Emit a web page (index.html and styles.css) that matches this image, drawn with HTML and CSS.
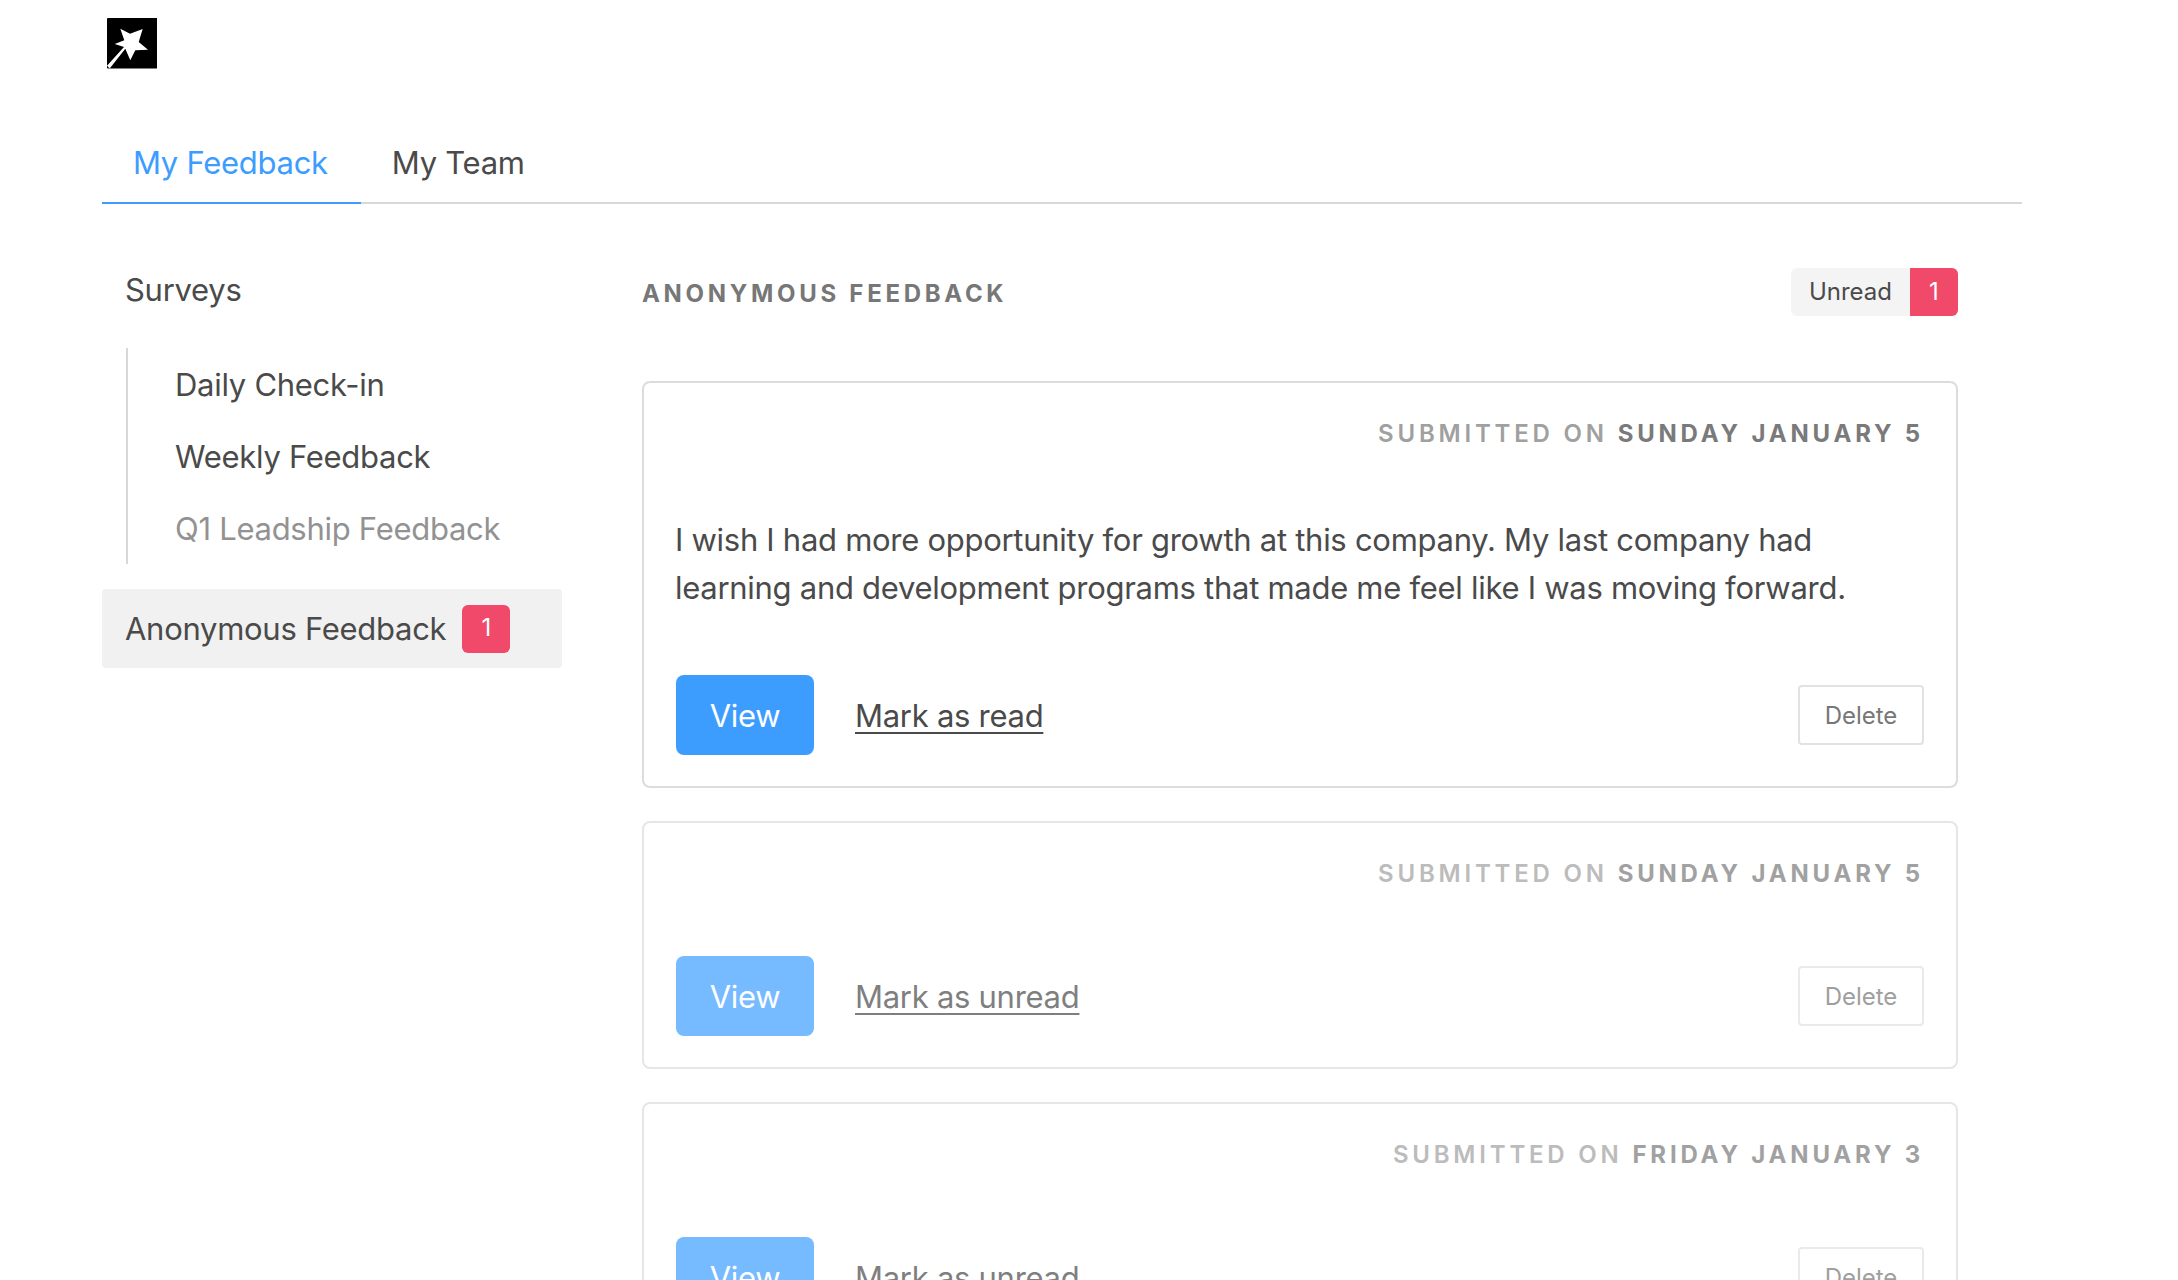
FILE: index.html

```html
<!DOCTYPE html>
<html lang="en">
<head>
  <meta charset="UTF-8" />
  <title>Anonymous Feedback</title>
  <link rel="stylesheet" href="styles.css">
</head>
<body>

<div class="container">
  <div class="logo">
    <svg viewBox="0 0 50.5 50.5" width="50.5" height="50.5">
      <rect width="50.5" height="50.5" rx="1" fill="#000"/>
      <path fill="#fff" d="M13.3 10.7 23 15.7 35.7 11 31.7 24 41 31.7 28.3 32.3 23.3 42.3 18.3 30.7 2.7 50.5 0 47.7 17 29 7.7 26 17.3 22.3Z"/>
    </svg>
  </div>

  <nav class="tabs">
    <a class="tab active">My Feedback</a>
    <a class="tab">My Team</a>
  </nav>

  <div class="columns">
    <aside class="sidebar">
      <div class="side-title">Surveys</div>
      <ul class="side-list">
        <li>Daily Check-in</li>
        <li>Weekly Feedback</li>
        <li class="muted">Q1 Leadship Feedback</li>
      </ul>
      <div class="side-active">Anonymous Feedback <span class="badge">1</span></div>
    </aside>

    <main class="main">
      <div class="main-head">
        <h2>ANONYMOUS FEEDBACK</h2>
        <div class="pill"><span class="pill-label">Unread</span><span class="pill-count">1</span></div>
      </div>

      <div class="card">
        <div class="date">SUBMITTED ON <b>SUNDAY JANUARY 5</b></div>
        <p class="message">I wish I had more opportunity for growth at this company. My last company had learning and development programs that made me feel like I was moving forward.</p>
        <div class="actions">
          <button class="view">View</button>
          <a class="mark">Mark as read</a>
          <button class="delete">Delete</button>
        </div>
      </div>

      <div class="card read">
        <div class="date">SUBMITTED ON <b>SUNDAY JANUARY 5</b></div>
        <div class="actions">
          <button class="view">View</button>
          <a class="mark">Mark as unread</a>
          <button class="delete">Delete</button>
        </div>
      </div>

      <div class="card read">
        <div class="date">SUBMITTED ON <b>FRIDAY JANUARY 3</b></div>
        <div class="actions">
          <button class="view">View</button>
          <a class="mark">Mark as unread</a>
          <button class="delete">Delete</button>
        </div>
      </div>
    </main>
  </div>
</div>

</body>
</html>
```

FILE: styles.css

```css
html, body { height: 1280px; overflow: hidden; }
body { margin: 0; background: #fff; color: #4a4a4a; font-family: Inter, "Noto Sans", sans-serif; font-size: 31px; letter-spacing: -0.28px; }
.container { width: 1920px; margin-left: 102px; }

.logo { height: 50px; padding: 18px 0 0 4.5px; }
.logo svg { display: block; }

.tabs { display: flex; margin-top: 56px; height: 78px; border-bottom: 2px solid #d8d8d8; }
.tab { height: 78px; padding: 0 33px 0 31px; line-height: 78px; }
.tab.active { color: #3d9dff; border-bottom: 2px solid #3d9dff; }

.columns { display: flex; gap: 80px; }

.sidebar { width: 460px; padding-top: 61px; }
.side-title { padding-left: 23px; line-height: 50px; }
.side-list { list-style: none; margin: 33px 0 25px 24px; padding: 0 0 0 47px; border-left: 2px solid #d8d8d8; }
.side-list li { height: 72px; line-height: 74px; }
.side-list .muted { color: #929292; }
.side-active { display: flex; align-items: center; gap: 16px; height: 79px; padding-left: 23px; background: #f1f1f1; border-radius: 4px; }
.badge { width: 48px; height: 48px; line-height: 46px; text-align: center; background: #f0496a; color: #fff; border-radius: 6px; font-size: 24px; }

.main { width: 1316px; padding-top: 64px; }
.main-head { display: flex; justify-content: space-between; align-items: center; margin-bottom: 65px; }
.main-head h2 { margin: 0; padding-top: 4px; font-size: 24px; line-height: 44px; letter-spacing: 3.7px; font-weight: 700; color: #777; }
.pill { display: flex; height: 48px; line-height: 48px; font-size: 24px; letter-spacing: 0; border-radius: 6px; overflow: hidden; }
.pill-label { padding: 0 18px; background: #f4f4f4; }
.pill-count { width: 48px; text-align: center; background: #f0496a; color: #fff; }

.card { border: 2px solid #dcdcdc; border-radius: 8px; padding: 35px 32px 31px; margin-bottom: 33px; }
.card.read { opacity: 0.7; }
.date { text-align: right; font-size: 24px; line-height: 32px; letter-spacing: 3.8px; font-weight: 600; color: #a0a0a0; margin-bottom: 66px; }
.date b { font-weight: 700; color: #7a7a7a; }
.message { margin: 1px 0 63px -1px; line-height: 48px; max-width: 1250px; }

.actions { display: flex; align-items: center; }
.view { width: 138px; height: 80px; border: none; border-radius: 8px; background: #3d9dff; color: #fff; font: inherit; letter-spacing: inherit; }
.mark { margin-left: 41px; text-decoration: underline; text-underline-offset: 5px; text-decoration-thickness: 2px; }
.delete { margin-left: auto; width: 126px; height: 60px; background: #fff; border: 2px solid #e2e2e2; border-radius: 4px; color: #777; font: inherit; font-size: 24px; letter-spacing: 0; }
```
